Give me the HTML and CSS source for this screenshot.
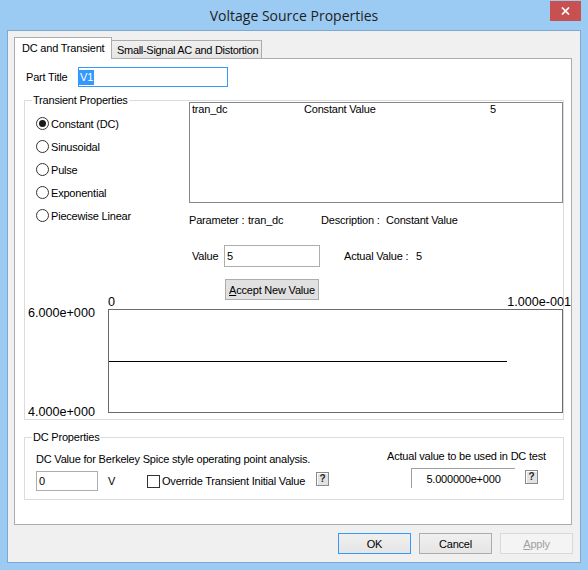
FILE: index.html
```html
<!DOCTYPE html>
<html lang="en">
<head>
    <meta charset="UTF-8">
    <meta name="viewport" content="width=device-width, initial-scale=1.0">
    <title>Voltage Source Properties</title>
    <link rel="stylesheet" href="styles.css">
</head>
<body>
  <div class="window">
    <div class="titlebar">
        <span></span>
        <span class="title">Voltage Source Properties</span>
        <span class="close-cell">
            <span class="close">
                <svg width="9" height="8" viewBox="0 0 9 8"><path d="M1 0.5 L8 7.5 M8 0.5 L1 7.5" stroke="#fff" stroke-width="1.7"/></svg>
            </span>
        </span>
    </div>
    <div class="client">
        <div class="tabs">
            <div class="tab active">DC and Transient</div>
            <div class="tab">Small-Signal AC and Distortion</div>
        </div>
        <div class="panel">
            <div class="part-row">
                <span class="part-label">Part Title</span>
                <div class="textbox part-input"><span class="sel">V1</span></div>
            </div>

            <div class="group transient">
                <div class="group-top">
                    <div class="radios">
                        <div class="group-title">Transient Properties</div>
                        <div class="radio-list">
                            <div class="radio on"><span class="circle"></span>Constant (DC)</div>
                            <div class="radio"><span class="circle"></span>Sinusoidal</div>
                            <div class="radio"><span class="circle"></span>Pulse</div>
                            <div class="radio"><span class="circle"></span>Exponential</div>
                            <div class="radio"><span class="circle"></span>Piecewise Linear</div>
                        </div>
                    </div>
                    <div class="params">
                        <div class="listbox">
                            <div class="list-row">
                                <span class="col1">tran_dc</span>
                                <span class="col2">Constant Value</span>
                                <span>5</span>
                            </div>
                        </div>
                        <div class="param-row">
                            <span class="w-param">Parameter :</span>
                            <span class="w-name">tran_dc</span>
                            <span class="w-desc">Description :</span>
                            <span>Constant Value</span>
                        </div>
                        <div class="value-row">
                            <span class="value-label">Value</span>
                            <div class="textbox value-input">5</div>
                            <span class="actual-label">Actual Value :</span>
                            <span>5</span>
                        </div>
                        <button class="btn accept"><u>A</u>ccept New Value</button>
                    </div>
                </div>
                <div class="graph">
                    <div class="yaxis">
                        <span>6.000e+000</span>
                        <span>4.000e+000</span>
                    </div>
                    <div class="plot">
                        <div class="xaxis">
                            <span>0</span>
                            <span class="xmax">1.000e-001</span>
                        </div>
                        <div class="plotbox"><div class="trace"></div></div>
                    </div>
                </div>
            </div>

            <div class="group dc">
                <div class="group-title">DC Properties</div>
                <div class="dc-body">
                    <div class="dc-left">
                        <div class="line">DC Value for Berkeley Spice style operating point analysis.</div>
                        <div class="dc-row">
                            <div class="textbox dc-input">0</div>
                            <span class="unit">V</span>
                            <span class="check"></span>
                            <span class="check-label">Override Transient Initial Value</span>
                            <span class="help">?</span>
                        </div>
                    </div>
                    <div class="dc-right">
                        <div class="line">Actual value to be used in DC test</div>
                        <div class="dc-row">
                            <div class="static">5.000000e+000</div>
                            <span class="help help-right">?</span>
                        </div>
                    </div>
                </div>
            </div>
        </div>
        <div class="buttons">
            <button class="btn default">OK</button>
            <button class="btn">Cancel</button>
            <button class="btn" disabled><u>A</u>pply</button>
        </div>
    </div>
  </div>
</body>
</html>
```

FILE: styles.css
```css
*{
    margin: 0;
    padding: 0;
    box-sizing: border-box;
}
body{
    background: #fff;
}
.window{
    width: 588px;
    height: 570px;
    background: #9bcbf2;
    padding: 0 7px 7px 7px;
    display: flex;
    flex-direction: column;
    font-family: "Liberation Sans", Arial, sans-serif;
    font-size: 11px;
    letter-spacing: -0.2px;
    color: #000;
    white-space: nowrap;
}
.titlebar{
    height: 30px;
    display: grid;
    grid-template-columns: 1fr auto 1fr;
    align-items: center;
}
.titlebar .title{
    font-family: "Open Sans", "Noto Sans", sans-serif;
    font-size: 14px;
    letter-spacing: 0;
    color: #1e1e1e;
    padding-top: 1px;
}
.close-cell{
    align-self: start;
    display: flex;
    justify-content: flex-end;
}
.close{
    width: 31px;
    height: 20px;
    margin-top: 1px;
    background: #c75050;
    display: flex;
    justify-content: center;
    align-items: center;
}
.client{
    flex: 1;
    background: #f0f0f0;
    border: 1px solid #80a7ce;
    padding: 6px 8px 0 6px;
}

/* tabs */
.tabs{
    height: 21px;
    display: flex;
    align-items: flex-end;
}
.tab{
    height: 18px;
    width: 151px;
    margin-left: -1px;
    padding: 3px 0 0 5px;
    line-height: 13px;
    letter-spacing: -0.3px;
    border: 1px solid #acacac;
    border-bottom: none;
    background: linear-gradient(#f0f0f0, #e5e5e5);
}
.tab.active{
    position: relative;
    height: 22px;
    width: 98px;
    margin-left: 0;
    margin-bottom: -1px;
    padding: 4px 0 0 7px;
    letter-spacing: -0.2px;
    background: #fff;
}
.panel{
    width: 558px;
    height: 467px;
    background: #fff;
    border: 1px solid #acacac;
    overflow: hidden;
}

/* part title */
.part-row{
    margin-top: 8px;
    padding-left: 11px;
    display: flex;
    align-items: center;
}
.part-label{
    width: 52px;
}
.textbox{
    height: 20px;
    border: 1px solid #abadb3;
    background: #fff;
    display: flex;
    align-items: center;
    padding-left: 2px;
}
.part-input{
    width: 150px;
    border-color: #3399ff;
    padding-left: 0;
}
.sel{
    background: #3399ff;
    color: #fff;
    line-height: 15px;
    padding: 0 1px;
}

/* group boxes */
.group{
    border: 1px solid #dcdcdc;
    margin: 13px 7px 0 9px;
}
.group-title{
    width: fit-content;
    margin: -7px 0 0 7px;
    padding: 0 1px;
    line-height: 13px;
    background: #fff;
}
.group-top{
    display: flex;
}
.radios{
    width: 164px;
}
.radio-list{
    margin-top: 5px;
}
.radio{
    height: 23px;
    padding-left: 11px;
    display: flex;
    align-items: center;
    gap: 2px;
}
.circle{
    width: 13px;
    height: 13px;
    border: 1px solid #333;
    border-radius: 50%;
    background: #fff;
    display: flex;
    justify-content: center;
    align-items: center;
}
.radio.on .circle::after{
    content: "";
    width: 7px;
    height: 7px;
    border-radius: 50%;
    background: #1a1a1a;
}
.params{
    flex: 1;
}
.listbox{
    margin-top: 1px;
    height: 101px;
    border: 1px solid #828790;
    padding: 0 2px;
}
.list-row{
    display: flex;
    line-height: 12px;
}
.list-row .col1{
    width: 112px;
}
.list-row .col2{
    width: 186px;
}
.param-row{
    margin-top: 11px;
    line-height: 13px;
    display: flex;
}
.w-param{
    width: 59px;
}
.w-name{
    width: 73px;
}
.w-desc{
    width: 65px;
}
.value-row{
    margin-top: 18px;
    display: flex;
    align-items: center;
}
.value-label{
    width: 35px;
    padding-left: 3px;
}
.value-input{
    width: 96px;
    height: 22px;
}
.actual-label{
    width: 72px;
    margin-left: 24px;
}
.btn{
    width: 73px;
    height: 21px;
    font-family: inherit;
    font-size: 11px;
    letter-spacing: -0.2px;
    color: #000;
    background: linear-gradient(#f0f0f0, #e5e5e5);
    border: 1px solid #acacac;
}
.btn.accept{
    width: 94px;
    margin: 12px 0 0 36px;
    background: #e1e1e1;
    border-color: #adadad;
}
.btn.default{
    border-color: #3399ff;
}
.btn:disabled{
    color: #a0a0a0;
    background: #f4f4f4;
    border-color: #d9d9d9;
}

/* graph */
.graph{
    margin-top: -5px;
    display: flex;
    font-size: 12.6px;
    letter-spacing: 0;
    line-height: 14px;
}
.yaxis{
    width: 83px;
    padding: 11px 0 0 3px;
    margin-bottom: -6px;
    display: flex;
    flex-direction: column;
    justify-content: space-between;
}
.plot{
    flex: 1;
}
.xaxis{
    height: 14px;
    display: flex;
    justify-content: space-between;
}
.xmax{
    margin-right: -8px;
}
.plotbox{
    height: 104px;
    border: 1px solid #6a6a6a;
}
.trace{
    margin-top: 51px;
    width: 398px;
    height: 1px;
    background: #000;
}
.transient{
    padding-bottom: 6px;
}

/* dc properties */
.group.dc{
    margin-top: 17px;
    padding-bottom: 8px;
}
.dc-body{
    display: flex;
}
.line{
    line-height: 13px;
}
.dc-left{
    margin: 9px 0 0 11px;
}
.dc-row{
    margin-top: 5px;
    display: flex;
    align-items: center;
}
.dc-input{
    width: 62px;
}
.unit{
    width: 49px;
    padding-left: 10px;
}
.check{
    width: 13px;
    height: 13px;
    border: 1px solid #333;
    background: #fff;
}
.check-label{
    width: 154px;
    margin-left: 2px;
}
.help{
    align-self: flex-start;
    margin-top: 1px;
    width: 13px;
    height: 14px;
    border: 1px solid #8a8a8a;
    box-shadow: inset 1px 1px #fff;
    background: #e2e2e2;
    font-size: 10px;
    font-weight: bold;
    line-height: 12px;
    text-align: center;
    color: #222;
}
.dc-right{
    width: 160px;
    margin: 6px 16px 0 auto;
}
.static{
    width: 104px;
    height: 20px;
    margin-left: 24px;
    border-top: 1px solid #a0a0a0;
    border-left: 1px solid #a0a0a0;
    display: flex;
    justify-content: center;
    align-items: center;
}
.help-right{
    margin: 2px 0 0 10px;
}

/* bottom buttons */
.buttons{
    margin: 8px -1px 0 0;
    display: flex;
    justify-content: flex-end;
    gap: 8px;
}
```
